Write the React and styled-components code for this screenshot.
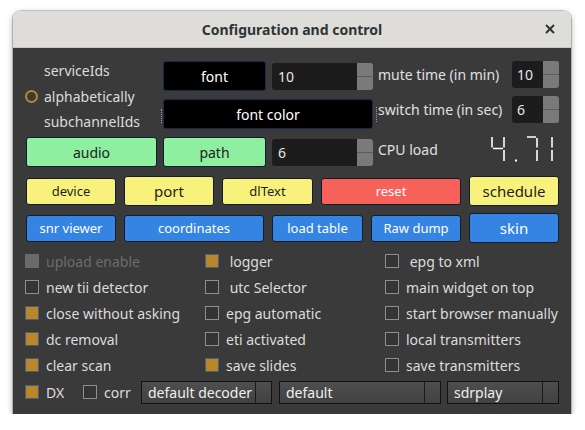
import React from 'react';
import styled, { createGlobalStyle } from 'styled-components';

const GlobalStyle = createGlobalStyle`
  html, body {
    margin: 0;
    padding: 0;
    background: #ffffff;
  }
  * {
    box-sizing: border-box;
  }
`;

const Window = styled.div`
  margin: 11px 0 0 13px;
  width: 558px;
  border-radius: 8px 8px 0 0;
  overflow: hidden;
  font-family: 'Noto Sans', 'Open Sans', sans-serif;
  box-shadow: 0 2px 6px rgba(0, 0, 0, 0.35), 0 0 0 1px rgba(0, 0, 0, 0.18);
`;

const TitleBar = styled.div`
  height: 37px;
  background: #deddda;
  border-bottom: 1px solid #c9c7c4;
  display: flex;
  align-items: center;
  justify-content: center;
  position: relative;
`;

const Title = styled.div`
  font-size: 14px;
  font-weight: 700;
  color: #2e3436;
`;

const CloseButton = styled.div`
  position: absolute;
  right: 13px;
  top: 10px;
  width: 16px;
  height: 16px;
  display: flex;
  align-items: center;
  justify-content: center;
`;

const Body = styled.div`
  background: #3a3a3a;
  padding: 13px 12px 9px 12px;
  display: flex;
  flex-direction: column;
`;

const TopGrid = styled.div`
  display: grid;
  grid-template-columns: 131px 103px 101px 1fr 47px;
  grid-template-rows: 30px 30px 30px;
  column-gap: 6px;
  row-gap: 8px;
  margin-left: 1px;
`;

const RadioGroup = styled.div`
  grid-column: 1;
  grid-row: 1 / span 2;
  display: flex;
  flex-direction: column;
  margin-top: -3px;
`;

const RadioItem = styled.div`
  height: 25.5px;
  flex-shrink: 0;
  display: flex;
  align-items: center;
  gap: 6px;
  padding-left: ${p => (p.$marked ? '0' : '19px')};
  font-size: 14px;
  color: #dcdcdc;
  margin-left: -1px;
`;

const RadioMark = styled.span`
  width: 13px;
  height: 13px;
  border-radius: 50%;
  border: 2px solid #b8862b;
  background: #3a3a3a;
`;

const PushButton = styled.div`
  grid-column: ${p => p.$col || 'auto'};
  grid-row: ${p => p.$row || 'auto'};
  height: ${p => p.$h || 30}px;
  align-self: center;
  display: flex;
  align-items: center;
  justify-content: center;
  background: ${p => p.$bg};
  color: ${p => p.$fg};
  font-size: ${p => p.$size || 13}px;
  border: 1px solid ${p => p.$border || '#0f1d30'};
  border-radius: 3px;
  position: relative;
`;

const FocusDots = styled.span`
  position: absolute;
  left: -3px;
  top: 9px;
  height: 14px;
  border-left: 1px dotted #9a9a9a;
`;

const SpinBox = styled.div`
  grid-column: ${p => p.$col || 'auto'};
  grid-row: ${p => p.$row || 'auto'};
  height: 27px;
  align-self: center;
  display: flex;
  background: #1c1c1c;
  border-radius: 3px;
  overflow: hidden;
`;

const SpinValue = styled.div`
  flex: 1;
  display: flex;
  align-items: center;
  padding-left: ${p => p.$pad || 6}px;
  color: #e6e6e6;
  font-size: 14px;
`;

const SpinArrows = styled.div`
  width: 16px;
  display: flex;
  flex-direction: column;
  gap: 1px;
  background: #5c5c5c;
`;

const SpinArrow = styled.div`
  flex: 1;
  background: #7a7a7a;
`;

const SidePanel = styled.div`
  grid-column: 4 / span 2;
  grid-row: 1 / span 3;
  display: grid;
  grid-template-columns: 1fr 47px;
  grid-template-rows: 27px 27px auto;
  column-gap: 6px;
  row-gap: 8px;
`;

const SideLabel = styled.div`
  display: flex;
  align-items: center;
  font-size: 14px;
  color: #e0e0e0;
  position: relative;
  white-space: nowrap;
  margin-left: -1px;
`;

const SideDots = styled.span`
  position: absolute;
  left: -2px;
  top: 11px;
  height: 15px;
  border-left: 1px dotted #9a9a9a;
`;

const CpuRow = styled.div`
  grid-column: 1 / span 2;
  margin-top: 5px;
  height: 26px;
  display: flex;
  align-items: center;
  justify-content: space-between;
  padding-right: 3px;
`;

const ButtonRow = styled.div`
  display: grid;
  grid-template-columns: ${p => p.$cols};
  column-gap: 8px;
  height: 30px;
  margin: ${p => p.$mt}px 0 0 1px;
`;

const CheckGrid = styled.div`
  display: grid;
  grid-template-columns: 180px 180px 180px;
  grid-auto-flow: column;
  grid-template-rows: repeat(5, 26px);
  margin-top: 5px;
`;

const CheckItem = styled.div`
  display: flex;
  align-items: center;
  gap: 7px;
  width: ${p => (p.$w ? `${p.$w}px` : 'auto')};
`;

const CheckMark = styled.span`
  width: 14px;
  height: 14px;
  flex-shrink: 0;
  border: 1px solid
    ${p => (p.$disabled ? '#6a6a6a' : p.$checked ? '#4d5e74' : '#8e8e8e')};
  background: ${p => (p.$disabled ? '#6a6a6a' : p.$checked ? '#b8862b' : '#343434')};
`;

const CheckText = styled.span`
  font-size: 14px;
  color: ${p => (p.$disabled ? '#6c6c6c' : '#dcdcdc')};
  white-space: pre;
`;

const BottomRow = styled.div`
  display: flex;
  align-items: center;
  height: 26px;
  margin-top: 1px;
`;

const Combo = styled.div`
  width: ${p => p.$w}px;
  height: 23px;
  margin-left: ${p => p.$ml || 0}px;
  display: flex;
  border: 1px solid #121212;
  background: linear-gradient(#4e4e4e, #414141);
`;

const ComboText = styled.div`
  flex: 1;
  display: flex;
  align-items: center;
  padding-left: 6px;
  font-size: 14px;
  color: #f0f0f0;
  white-space: nowrap;
  overflow: hidden;
`;

const ComboArrow = styled.div`
  width: 16px;
  border-left: 1px solid #1a1a1a;
`;

const LcdDigits = () => (
  <svg width="66" height="28" viewBox="0 0 66 28">
    <g stroke="#ffffff" strokeWidth="1.6" fill="none">
      <line x1="2" y1="2" x2="2" y2="12.5" />
      <line x1="3" y1="13.5" x2="13" y2="13.5" />
      <line x1="14" y1="2" x2="14" y2="12.5" />
      <line x1="14" y1="15" x2="14" y2="26" />
      <line x1="37" y1="2" x2="46" y2="2" />
      <line x1="47" y1="3" x2="47" y2="12.5" />
      <line x1="47" y1="15" x2="47" y2="26" />
      <line x1="62" y1="2" x2="62" y2="12.5" />
      <line x1="62" y1="15" x2="62" y2="26" />
    </g>
    <rect x="25" y="24.5" width="2" height="2" fill="#ffffff" />
  </svg>
);

const checkColumns = [
  [
    { label: 'upload enable', disabled: true },
    { label: 'new tii detector' },
    { label: 'close without asking', checked: true },
    { label: 'dc removal', checked: true },
    { label: 'clear scan', checked: true },
  ],
  [
    { label: ' logger', checked: true },
    { label: ' utc Selector' },
    { label: 'epg automatic' },
    { label: 'eti activated' },
    { label: 'save slides', checked: true },
  ],
  [
    { label: ' epg to xml' },
    { label: 'main widget on top' },
    { label: 'start browser manually' },
    { label: 'local transmitters' },
    { label: 'save transmitters' },
  ],
];

const yellow = '#f8f27c';
const blue = '#3584e4';

const App = () => {
  return (
    <>
      <GlobalStyle />
      <Window>
        <TitleBar>
          <Title>Configuration and control</Title>
          <CloseButton>
            <svg width="10" height="10" viewBox="0 0 10 10">
              <path d="M1 1 L9 9 M9 1 L1 9" stroke="#2e3436" strokeWidth="2" />
            </svg>
          </CloseButton>
        </TitleBar>
        <Body>
          <TopGrid>
            <RadioGroup>
              <RadioItem>serviceIds</RadioItem>
              <RadioItem $marked>
                <RadioMark />
                alphabetically
              </RadioItem>
              <RadioItem>subchannelIds</RadioItem>
            </RadioGroup>
            <PushButton $col="2" $row="1" $bg="#000" $fg="#fff" $size={14} $border="#16294a">
              font
            </PushButton>
            <SpinBox $col="3" $row="1">
              <SpinValue>10</SpinValue>
              <SpinArrows>
                <SpinArrow />
                <SpinArrow />
              </SpinArrows>
            </SpinBox>
            <PushButton $col="2 / span 2" $row="2" $bg="#000" $fg="#fff" $size={14} $border="#16294a">
              <FocusDots />
              font color
            </PushButton>
            <PushButton $col="1" $row="3" $bg="#8def9f" $fg="#1e1e1e" $size={14}>
              audio
            </PushButton>
            <PushButton $col="2" $row="3" $bg="#8def9f" $fg="#1e1e1e" $size={14}>
              path
            </PushButton>
            <SpinBox $col="3" $row="3">
              <SpinValue>6</SpinValue>
              <SpinArrows>
                <SpinArrow />
                <SpinArrow />
              </SpinArrows>
            </SpinBox>
            <SidePanel>
              <SideLabel>mute time (in min)</SideLabel>
              <SpinBox>
                <SpinValue $pad={5}>10</SpinValue>
                <SpinArrows>
                  <SpinArrow />
                  <SpinArrow />
                </SpinArrows>
              </SpinBox>
              <SideLabel>
                <SideDots />
                switch time (in sec)
              </SideLabel>
              <SpinBox>
                <SpinValue $pad={5}>6</SpinValue>
                <SpinArrows>
                  <SpinArrow />
                  <SpinArrow />
                </SpinArrows>
              </SpinBox>
              <CpuRow>
                <SideLabel>CPU load</SideLabel>
                <LcdDigits />
              </CpuRow>
            </SidePanel>
          </TopGrid>

          <ButtonRow $cols="90px 90px 91px 140px 90px" $mt={9}>
            <PushButton $bg={yellow} $fg="#1e1e1e" $h={27}>device</PushButton>
            <PushButton $bg={yellow} $fg="#1e1e1e" $size={15}>port</PushButton>
            <PushButton $bg={yellow} $fg="#1e1e1e" $h={27}>dlText</PushButton>
            <PushButton $bg="#f6625a" $fg="#ffffff" $h={27}>reset</PushButton>
            <PushButton $bg={yellow} $fg="#1e1e1e" $size={15}>schedule</PushButton>
          </ButtonRow>

          <ButtonRow $cols="90px 140px 91px 90px 90px" $mt={7}>
            <PushButton $bg={blue} $fg="#ffffff" $h={27}>snr viewer</PushButton>
            <PushButton $bg={blue} $fg="#ffffff" $h={27}>coordinates</PushButton>
            <PushButton $bg={blue} $fg="#ffffff" $h={27}>load table</PushButton>
            <PushButton $bg={blue} $fg="#ffffff" $h={27}>Raw dump</PushButton>
            <PushButton $bg={blue} $fg="#ffffff" $size={15}>skin</PushButton>
          </ButtonRow>

          <CheckGrid>
            {checkColumns.flat().map(item => (
              <CheckItem key={item.label}>
                <CheckMark $checked={item.checked} $disabled={item.disabled} />
                <CheckText $disabled={item.disabled}>{item.label}</CheckText>
              </CheckItem>
            ))}
          </CheckGrid>

          <BottomRow>
            <CheckItem $w={58}>
              <CheckMark $checked />
              <CheckText>DX</CheckText>
            </CheckItem>
            <CheckItem $w={58}>
              <CheckMark />
              <CheckText>corr</CheckText>
            </CheckItem>
            <Combo $w={131}>
              <ComboText>default decoder</ComboText>
              <ComboArrow />
            </Combo>
            <Combo $w={162} $ml={7}>
              <ComboText>default</ComboText>
              <ComboArrow />
            </Combo>
            <Combo $w={112} $ml={6}>
              <ComboText>sdrplay</ComboText>
              <ComboArrow />
            </Combo>
          </BottomRow>
        </Body>
      </Window>
    </>
  );
};

export default App;
